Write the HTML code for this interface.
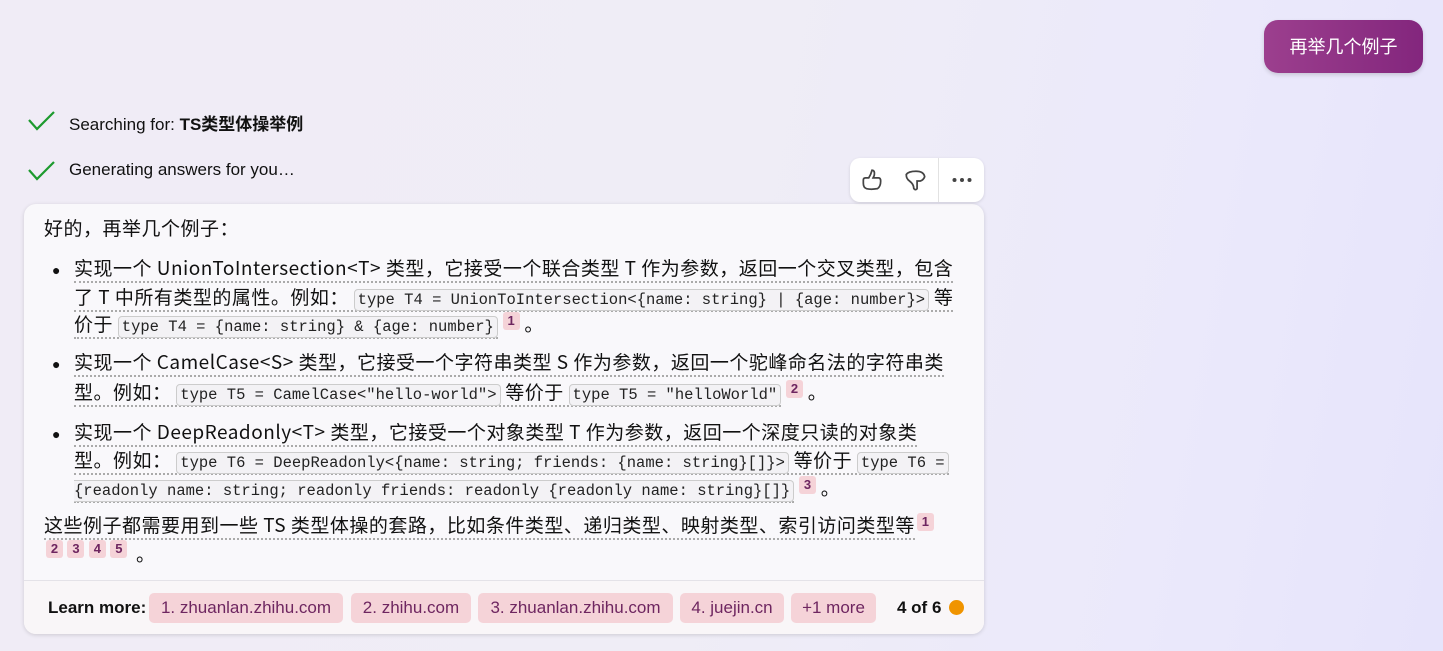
<!DOCTYPE html>
<html><head><meta charset="utf-8"><style>
*{margin:0;padding:0;box-sizing:border-box}
body{width:1443px;height:651px;overflow:hidden;position:relative;font-family:"Liberation Sans","Noto Sans CJK SC",sans-serif;color:#111;
background:linear-gradient(100deg,#f0ecf6 0%,#efedf6 50%,#ebe9fb 80%,#e6e4fb 100%)}
.abs{position:absolute;white-space:nowrap}
.bubble{left:1264px;top:20px;width:159px;height:53px;border-radius:14px;background:linear-gradient(90deg,#9c3f8e,#83267d);color:#fff;font-size:18px;line-height:53px;text-align:center;box-shadow:0 2px 4px rgba(0,0,0,.15);font-family:"Noto Sans CJK SC",sans-serif}
.st{font-size:17px;left:69px}
.card{left:24px;top:204px;width:960px;height:430px;background:#f9f8fb;border-radius:12px;box-shadow:0 1px 4px rgba(0,0,0,.15)}
.foot{left:24px;top:580px;width:960px;height:54px;border-top:1px solid #e4e2e8;border-radius:0 0 12px 12px;background:#f9f6f8}
.l{font-size:19px;letter-spacing:.5px;line-height:24px;height:27px;font-family:"Noto Sans CJK SC",sans-serif}
.u{border-bottom:2px dotted #aaa}
code{font-family:"Liberation Mono",monospace;font-size:15.5px;letter-spacing:0;border:1px solid #ccc;border-radius:4px;background:#f3f2f5;padding:1px 3px;color:#222}
.sup{display:inline-block;background:#f5d3d8;color:#6e2660;font-size:13px;font-weight:bold;border-radius:3px;width:17px;height:18px;line-height:18px;text-align:center;vertical-align:6px;font-family:"Liberation Sans",sans-serif;letter-spacing:0}
.chip{position:absolute;top:593px;height:30px;line-height:30px;background:#f5d3d8;color:#6e2660;font-size:17px;border-radius:5px;text-align:center}
.tb{left:850px;top:158px;width:134px;height:44px;background:#fff;border-radius:10px;box-shadow:0 1px 3px rgba(0,0,0,.12)}
</style></head><body>
<div class="abs bubble">再举几个例子</div>

<svg class="abs" style="left:27px;top:109px" width="30" height="24"><path d="M2 11 L10 20 L27 3" fill="none" stroke="#1d9a2e" stroke-width="2.2"/></svg>
<div class="abs st" style="top:110px">Searching for: <b>TS类型体操举例</b></div>
<svg class="abs" style="left:27px;top:159px" width="30" height="24"><path d="M2 11 L10 20 L27 3" fill="none" stroke="#1d9a2e" stroke-width="2.2"/></svg>
<div class="abs st" style="top:160px">Generating answers for you…</div>

<div class="abs card"></div>
<div class="abs foot"></div>

<div class="abs tb">
<svg style="position:absolute;left:9px;top:9px" width="26" height="26" viewBox="0 0 24 24"><path d="M4 12 Q4 10 6 10 L9 10 Q11 7 12 3 Q15 3 14 8 L13 10 L18 10 Q20 10 20 13 Q20 18 17 20 Q11 21 7 20 Q4 19 4 15 Z" fill="none" stroke="#444" stroke-width="1.6"/></svg>
<svg style="position:absolute;left:53px;top:10px" width="26" height="26" viewBox="0 0 24 24"><path d="M3 6 Q5 3 12 3 Q19 3 20 8 Q19 11 16 12 L13 12 L13 19 Q12 21 10 19 Q10 15 6 12 Q3 10 3 6 Z" fill="none" stroke="#444" stroke-width="1.6"/></svg>
<div style="position:absolute;left:88px;top:0;width:1px;height:44px;background:#e2e2e2"></div>
<svg style="position:absolute;left:102px;top:19px" width="20" height="6"><circle cx="2.5" cy="3" r="2" fill="#444"/><circle cx="10" cy="3" r="2" fill="#444"/><circle cx="17.5" cy="3" r="2" fill="#444"/></svg>
</div>

<div class="abs l" style="left:44px;top:216px">好的，再举几个例子：</div>

<div class="abs" style="left:52px;top:262px;font-size:14px">●</div>
<div class="abs l u" style="left:74px;top:256px">实现一个 UnionToIntersection&lt;T&gt; 类型，它接受一个联合类型 T 作为参数，返回一个交叉类型，包含</div>
<div class="abs l u" style="left:74px;top:285px">了 T 中所有类型的属性。例如： <code>type T4 = UnionToIntersection&lt;{name: string} | {age: number}&gt;</code> 等</div>
<div class="abs l" style="left:74px;top:312px"><span class="u">价于 <code>type T4 = {name: string} &amp; {age: number}</code></span> <span class="sup">1</span> 。</div>

<div class="abs" style="left:52px;top:356px;font-size:14px">●</div>
<div class="abs l u" style="left:74px;top:350px">实现一个 CamelCase&lt;S&gt; 类型，它接受一个字符串类型 S 作为参数，返回一个驼峰命名法的字符串类</div>
<div class="abs l" style="left:74px;top:380px"><span class="u">型。例如： <code>type T5 = CamelCase&lt;"hello-world"&gt;</code> 等价于 <code>type T5 = "helloWorld"</code></span> <span class="sup">2</span> 。</div>

<div class="abs" style="left:52px;top:426px;font-size:14px">●</div>
<div class="abs l u" style="left:74px;top:420px">实现一个 DeepReadonly&lt;T&gt; 类型，它接受一个对象类型 T 作为参数，返回一个深度只读的对象类</div>
<div class="abs l u" style="left:74px;top:448px">型。例如： <code>type T6 = DeepReadonly&lt;{name: string; friends: {name: string}[]}&gt;</code> 等价于 <code>type T6 =</code></div>
<div class="abs l" style="left:74px;top:476px"><span class="u"><code style="border-left:none;border-radius:0 4px 4px 0;padding-left:0">{readonly name: string; readonly friends: readonly {readonly name: string}[]}</code></span> <span class="sup">3</span> 。</div>

<div class="abs l" style="left:44px;top:513px"><span class="u">这些例子都需要用到一些 TS 类型体操的套路，比如条件类型、递归类型、映射类型、索引访问类型等</span><span class="sup" style="margin-left:2px">1</span></div>
<div class="abs" style="left:46px;top:540px"><span class="sup">2</span> <span class="sup">3</span> <span class="sup">4</span> <span class="sup">5</span></div>
<div class="abs l" style="left:136px;top:542px">。</div>

<div class="abs" style="left:48px;top:598px;font-size:17px;font-weight:bold">Learn more:</div>
<div class="chip" style="left:149px;width:194px">1. zhuanlan.zhihu.com</div>
<div class="chip" style="left:351px;width:120px">2. zhihu.com</div>
<div class="chip" style="left:478px;width:195px">3. zhuanlan.zhihu.com</div>
<div class="chip" style="left:680px;width:104px">4. juejin.cn</div>
<div class="chip" style="left:791px;width:85px">+1 more</div>
<div class="abs" style="left:897px;top:598px;font-size:17px;font-weight:bold">4 of 6</div>
<div class="abs" style="left:949px;top:600px;width:15px;height:15px;border-radius:50%;background:#f09400"></div>
</body></html>
